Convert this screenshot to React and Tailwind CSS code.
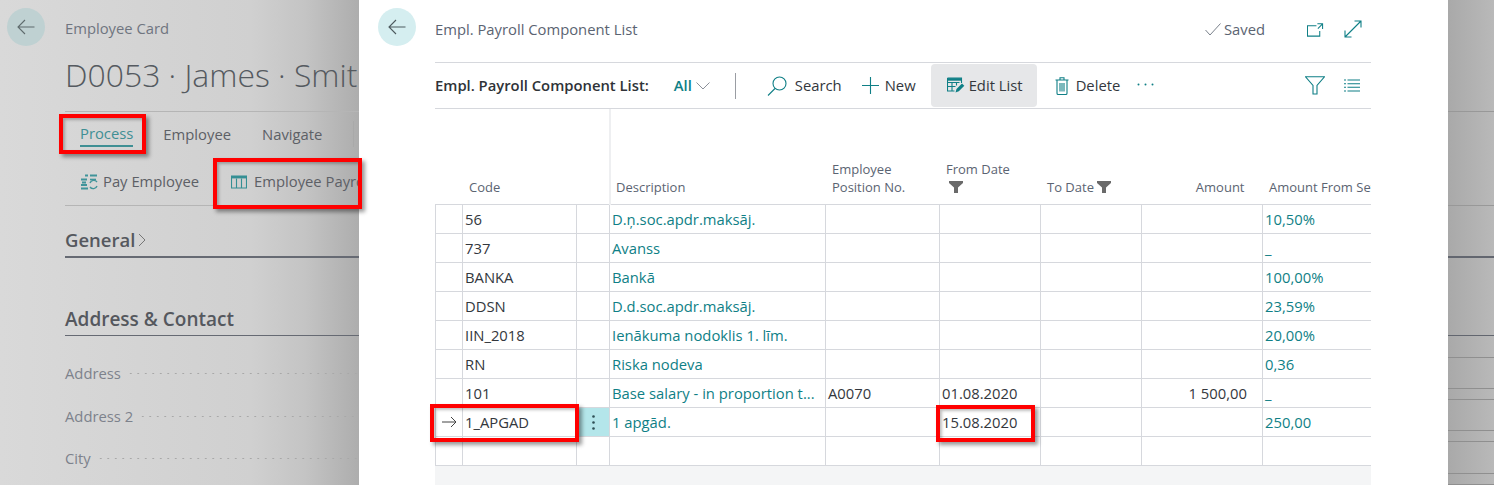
const TEAL = "#0f7f86";

const rows = [
  { code: "56", desc: "D.ņ.soc.apdr.maksāj.", set: "10,50%" },
  { code: "737", desc: "Avanss", set: "_" },
  { code: "BANKA", desc: "Bankā", set: "100,00%" },
  { code: "DDSN", desc: "D.d.soc.apdr.maksāj.", set: "23,59%" },
  { code: "IIN_2018", desc: "Ienākuma nodoklis 1. līm.", set: "20,00%" },
  { code: "RN", desc: "Riska nodeva", set: "0,36" },
  { code: "101", desc: "Base salary - in proportion t...", pos: "A0070", from: "01.08.2020", amount: "1 500,00", set: "_" },
  { code: "1_APGAD", desc: "1 apgād.", from: "15.08.2020", set: "250,00", current: true },
  { code: "", desc: "", set: "" },
];

const BackArrow = ({ color }) => (
  <svg width="18" height="16" viewBox="0 0 18 16" fill="none" stroke={color} strokeWidth="1.1">
    <path d="M17.5 8H1M8 1 1 8l7 7" />
  </svg>
);

const Funnel = () => (
  <svg width="14" height="12" viewBox="0 0 14 12" fill="#6a6a6a">
    <path d="M0 0h14v2L9 6.5V12H5V6.5L0 2z" />
  </svg>
);

// pay employee icon, coins on the left and round arrows on the right
const PayIcon = () => (
  <svg width="18" height="18" viewBox="0 0 18 18" fill="none" stroke={TEAL} strokeWidth="1.4" opacity="0.75">
    <path d="M5 2.500h3M1 6.500h6M10 2.500h7M1 12h6M1 15.500h7M2 9.500h4" strokeWidth="2.200" />
    <path d="M10 10a4 4 0 0 1 7-1M17 13a4 4 0 0 1-7 1" />
    <path d="M10 6.500h6" strokeWidth="1.600" />
  </svg>
);

const ColumnsIcon = () => (
  <svg width="16" height="14" viewBox="0 0 16 14" fill="none" stroke={TEAL} strokeWidth="1.1" opacity="0.8">
    <path d="M.5 1h15v12H.5zM5.500 3.500V13M10.500 3.500V13" />
    <path d="M.5 2.200h15" strokeWidth="2.400" />
  </svg>
);

const EditListIcon = () => (
  <svg width="18" height="17" viewBox="0 0 18 17" fill="none" stroke={TEAL} strokeWidth="1.1">
    <path d="M.5 1h14v5M.5 1v13h7M.5 5.500h12M.5 9.500h8M5 5.500V14M9.500 5.500v3" />
    <path d="M.5 2.400h14" strokeWidth="2.600" />
    <path d="M8.500 15.500 9.500 12l5.500-5.500 2.300 2.300-5.500 5.500z" fill={TEAL} stroke="none" />
  </svg>
);

const TrashIcon = () => (
  <svg width="14" height="18" viewBox="0 0 14 18" fill="none" stroke={TEAL} strokeWidth="1.1">
    <path d="M.5 3h13M2 3v13.200c0 .7.5 1.300 1.200 1.300h7.600c.7 0 1.200-.6 1.200-1.300V3M5 3V.7h4V3M5 6v8.500M7 6v8.500M9 6v8.500" />
  </svg>
);

const Leader = ({ label, rowClass }) => (
  <div className={`flex items-center gap-[6px] text-[14.8px] text-[#7d828c] ${rowClass}`}>
    <span className="shrink-0">{label}</span>
    <span className="h-[3px] flex-1 bg-[radial-gradient(circle,#a8a8a8_1px,transparent_1px)] bg-[length:7.500px_3px]" />
  </div>
);

const EmployeeCard = () => (
  <div className="w-[359px] shrink-0 overflow-hidden bg-[linear-gradient(90deg,#d9d9d9_0%,#d0d0d0_70%,#c4c4c4_85%,#adadad_100%)]">
    <div className="flex h-[46px] items-end pl-[7px]">
      <div className="flex h-[38px] w-[38px] items-center justify-center rounded-full bg-[#bfd1d2]">
        <BackArrow color="#5f6b6d" />
      </div>
      <span className="mb-[7px] ml-[20px] text-[14.8px] text-[#6f7580]">Employee Card</span>
    </div>
    <div className="ml-[65px] w-[340px]">
      <h1 className="mt-[7px] h-[59px] whitespace-nowrap border-b border-[#b5b5b5] text-[31.900px] font-light leading-[44px] text-[#555a60]">
        D0053 · James · Smith
      </h1>
      <div className="flex h-[46px] items-center pb-[2px] text-[14.8px] text-[#5d6066]">
        <div className="ml-[15px] flex h-[26px] items-center border-b-2 border-[#3f8f94] text-[#3f8f94]">Process</div>
        <span className="ml-[30px]">Employee</span>
        <span className="ml-[31px]">Navigate</span>
        <span className="ml-[31px] h-[26px] border-l border-[#a9a9a9]" />
      </div>
      <div className="flex h-[48px] items-center whitespace-nowrap border-b border-[#b5b5b5] text-[14.8px] text-[#5d6066]">
        <span className="ml-[15px]"><PayIcon /></span>
        <span className="ml-[5px]">Pay Employee</span>
        <span className="ml-[32px]"><ColumnsIcon /></span>
        <span className="ml-[7px]">Employee Payroll Components</span>
      </div>
      <div className="mt-[20px] flex h-[32px] items-center gap-[3px] border-b-2 border-[#666a73] pb-[3px] text-[18.500px] font-semibold text-[#55585e]">
        General
        <svg width="8" height="14" viewBox="0 0 8 14" fill="none" stroke="#777" strokeWidth="1"><path d="m1 1 6 6-6 6" /></svg>
      </div>
      <div className="mt-[47px] flex h-[31px] items-center border-b border-[#666a73] pb-[1px] text-[19px] font-semibold text-[#55585e]">
        Address &amp; Contact
      </div>
      <Leader label="Address" rowClass="mt-[25px] h-[24px]" />
      <Leader label="Address 2" rowClass="mt-[19px] h-[24px]" />
      <Leader label="City" rowClass="mt-[18px] h-[24px]" />
    </div>
  </div>
);

const Toolbar = () => (
  <div className="flex h-[47px] items-center whitespace-nowrap border-y border-[#d6d8dd] text-[14.8px] text-[#33373d]">
    <span className="font-semibold text-[#2f3338]">Empl. Payroll Component List:</span>
    <span className="ml-[25px] font-semibold text-[#0f7f86]">All</span>
    <svg className="ml-[4px]" width="14" height="8" viewBox="0 0 14 8" fill="none" stroke="#8b9099" strokeWidth="1"><path d="m.5.5 6.500 6.500L13.500.5" /></svg>
    <span className="ml-[25px] h-[26px] border-l border-[#9a9da3]" />
    <svg className="ml-[31px]" width="20" height="20" viewBox="0 0 20 20" fill="none" stroke={TEAL} strokeWidth="1.1"><circle cx="12.500" cy="7.500" r="6.500" /><path d="M8 12.500 1 19.500" /></svg>
    <span className="ml-[8px]">Search</span>
    <svg className="ml-[20px]" width="17" height="17" viewBox="0 0 17 17" fill="none" stroke={TEAL} strokeWidth="1.1"><path d="M8.500 0v17M0 8.500h17" /></svg>
    <span className="ml-[6px]">New</span>
    <div className="ml-[15px] flex h-[43px] w-[106px] items-center rounded-sm bg-[#e6e7e9] pl-[16px]">
      <EditListIcon />
      <span className="ml-[4px]">Edit List</span>
    </div>
    <span className="ml-[18px]"><TrashIcon /></span>
    <span className="ml-[7px]">Delete</span>
    <svg className="mb-[3px] ml-[17px]" width="17" height="3" viewBox="0 0 17 3" fill={TEAL}><circle cx="1.500" cy="1.500" r="1" /><circle cx="8.500" cy="1.500" r="1" /><circle cx="15.500" cy="1.500" r="1" /></svg>
    <svg className="ml-auto" width="20" height="19" viewBox="0 0 20 19" fill="none" stroke={TEAL} strokeWidth="1.1"><path d="M.5.800h19L12 9.500v8.500H8V9.500z" /></svg>
    <svg className="ml-[19px] mr-[11px]" width="16" height="13" viewBox="0 0 16 13" fill="none" stroke={TEAL} strokeWidth="1.1"><path d="M0 1h2M3.500 1H16M0 4.700h2M3.500 4.700H16M0 8.300h2M3.500 8.300H16M0 12h2M3.500 12H16" /></svg>
  </div>
);

const cellClass = "border border-[#d6d8dd] px-0 pb-0 pt-[1px] whitespace-nowrap overflow-hidden";

const PayrollTable = () => (
  <table className="w-[936px] table-fixed border-collapse text-[14.8px] text-[#33373d]">
    <colgroup>
      <col className="w-[27px]" />
      <col className="w-[114px]" />
      <col className="w-[33px]" />
      <col className="w-[216px]" />
      <col className="w-[114px]" />
      <col className="w-[101px]" />
      <col className="w-[101px]" />
      <col className="w-[121px]" />
      <col className="w-[109px]" />
    </colgroup>
    <thead>
      <tr className="h-[95px] align-bottom text-[13px] font-normal leading-[18px] text-[#5b6472]">
        <th />
        <th className="pb-[8px] pl-[6.500px] text-left font-normal">Code</th>
        <th />
        <th className="border-l-2 border-[#eeeff1] pb-[8px] pl-[5.500px] text-left font-normal">Description</th>
        <th className="pb-[8px] pl-[6.500px] text-left font-normal">Employee<br />Position No.</th>
        <th className="pb-[8px] pl-[6.500px] text-left font-normal">
          From Date
          <div className="mt-[3px] h-[15px] pl-[3px]"><Funnel /></div>
        </th>
        <th className="pb-[8px] pl-[6.500px] text-left font-normal">
          <span className="flex items-center gap-[3px]">To Date <Funnel /></span>
        </th>
        <th className="pb-[8px] pr-[18px] text-right font-normal">Amount</th>
        <th className="overflow-hidden whitespace-nowrap pb-[8px] pl-[6.500px] text-left font-normal">Amount From Setup</th>
      </tr>
    </thead>
    <tbody>
      {rows.map((row) => (
        <tr key={row.code || "empty"} className="h-[29px]">
          <td className={`${cellClass} text-center`}>
            {row.current && (
              <svg className="mx-auto" width="15" height="12" viewBox="0 0 15 12" fill="none" stroke="#444" strokeWidth="1"><path d="M0 6h14M9 1l5 5-5 5" /></svg>
            )}
          </td>
          <td className={`${cellClass} pl-[2px]`}>{row.code}</td>
          <td className={`${cellClass} text-center ${row.current ? "bg-[#b4e6ea]" : ""}`}>
            {row.current && (
              <svg className="mx-auto" width="3" height="15" viewBox="0 0 3 15" fill="#2f4f55"><circle cx="1.500" cy="1.500" r="1.300" /><circle cx="1.500" cy="7.500" r="1.300" /><circle cx="1.500" cy="13.500" r="1.300" /></svg>
            )}
          </td>
          <td className={`${cellClass} pl-[2px] text-[#0f7f86]`}>{row.desc}</td>
          <td className={`${cellClass} pl-[2px]`}>{row.pos}</td>
          <td className={`${cellClass} pl-[2px]`}>{row.from}</td>
          <td className={cellClass} />
          <td className={`${cellClass} pr-[15px] text-right`}>{row.amount}</td>
          <td className={`${cellClass} border-r-0 pl-[2px] text-[#0f7f86]`}>{row.set}</td>
        </tr>
      ))}
    </tbody>
  </table>
);

const PayrollList = () => (
  <div className="w-[1089px] shrink-0 bg-white">
    <div className="flex h-[62px] items-start pl-[19px] pr-[86px]">
      <div className="mt-[8px] flex h-[38px] w-[38px] items-center justify-center rounded-full bg-[#d5eef0]">
        <BackArrow color="#4c5a5e" />
      </div>
      <span className="ml-[19px] mt-[18px] text-[14.8px] text-[#5b6472]">Empl. Payroll Component List</span>
      <div className="ml-auto mt-[18px] flex items-center text-[14.8px] text-[#5b6472]">
        <svg width="16" height="13" viewBox="0 0 16 13" fill="none" stroke="#7a818b" strokeWidth="1"><path d="m.5 7 4.500 5L15.500.5" /></svg>
        <span className="ml-[3px]">Saved</span>
        <svg className="ml-[42px]" width="17" height="15" viewBox="0 0 18 15" fill="none" stroke={TEAL} strokeWidth="1.1"><path d="M10 3.500H.5v11h13V9M11 1.500h5.500V7M16.500 1.500 11.500 6.500" /></svg>
        <svg className="ml-[20px]" width="18" height="18" viewBox="0 0 18 18" fill="none" stroke={TEAL} strokeWidth="1.1"><path d="M1 17 17 1M10.500 1H17v6.500M1 10.500V17h6.500" /></svg>
      </div>
    </div>
    <div className="ml-[76px] w-[936px] overflow-hidden">
      <Toolbar />
      <PayrollTable />
      <div className="h-[30px] bg-[#f4f5f6]" />
    </div>
  </div>
);

// the fields of the card that stay visible right of the dialog
const RightStrip = () => (
  <div className="flex-1 bg-[linear-gradient(90deg,#a9a9a9_0%,#b9b9b9_100%)]">
    <div className="mt-[111px] h-px bg-[#989898]" />
    <div className="mt-[93px] h-px bg-[#989898]" />
    <div className="mt-[50px] h-[2px] bg-[#62666f]" />
    <div className="mt-[77px] h-px bg-[#62666f]" />
    <div className="mt-[21px] h-px bg-[#8f8f8f]" />
    <div className="mt-[30px] h-px bg-[#8f8f8f]" />
    <div className="mt-[10px] h-px bg-[#8f8f8f]" />
    <div className="mt-[30px] h-px bg-[#8f8f8f]" />
    <div className="mt-[10px] h-px bg-[#8f8f8f]" />
    <div className="mt-[31px] h-px bg-[#8f8f8f]" />
    <div className="mt-[10px] h-px bg-[#8f8f8f]" />
  </div>
);

const redBox = "absolute border-4 border-[#ff0000] shadow-[3px_3px_4px_rgba(0,0,0,0.4),inset_2px_2px_3px_rgba(0,0,0,0.25)]";

const App = () => (
  <div className="relative flex h-[485px] w-[1494px] overflow-hidden font-['Open_Sans',sans-serif]">
    <EmployeeCard />
    <PayrollList />
    <RightStrip />
    <div className={`${redBox} left-[59px] top-[114px] h-[40px] w-[87px]`} />
    <div className={`${redBox} left-[213px] top-[158px] h-[51px] w-[149px]`} />
    <div className={`${redBox} left-[430px] top-[404px] h-[38px] w-[149px]`} />
    <div className={`${redBox} left-[936px] top-[405px] h-[37px] w-[99px]`} />
  </div>
);

export default App;
